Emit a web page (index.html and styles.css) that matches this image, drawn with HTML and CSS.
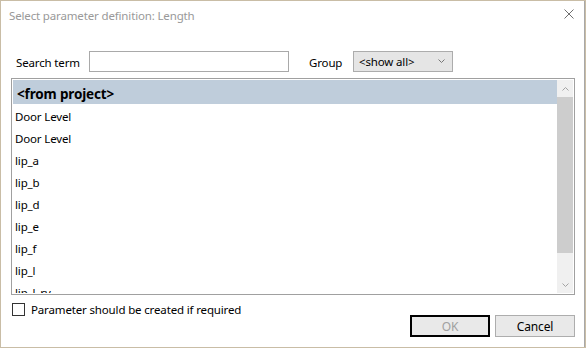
FILE: index.html
```html
<!DOCTYPE html>
<html lang="en">
<head>
    <meta charset="UTF-8">
    <title>Select parameter definition: Length</title>
    <link rel="stylesheet" href="styles.css">
</head>
<body>
    <div class="dialog">
        <div class="titlebar">
            <span class="title">Select parameter definition: Length</span>
            <svg class="close" width="10" height="10" viewBox="0 0 10 10">
                <path d="M0.5 0.5 L9.5 9.5 M9.5 0.5 L0.5 9.5" stroke="#6f6f6f" stroke-width="1" fill="none"/>
            </svg>
        </div>

        <div class="filter">
            <label class="lbl-search">Search term</label>
            <input class="search" type="text">
            <label class="lbl-group">Group</label>
            <div class="select">
                <span>&lt;show all&gt;</span>
                <svg width="7" height="4" viewBox="0 0 7 4">
                    <path d="M0.5 0.5 L3.5 3.5 L6.5 0.5" stroke="#777" fill="none"/>
                </svg>
            </div>
        </div>

        <div class="list">
            <div class="rows">
                <div class="row selected">&lt;from project&gt;</div>
                <div class="row">Door Level</div>
                <div class="row">Door Level</div>
                <div class="row">lip_a</div>
                <div class="row">lip_b</div>
                <div class="row">lip_d</div>
                <div class="row">lip_e</div>
                <div class="row">lip_f</div>
                <div class="row">lip_l</div>
                <div class="row">lip_l_rv</div>
            </div>
            <div class="scrollbar">
                <div class="arrow">
                    <svg width="7" height="4" viewBox="0 0 7 4"><path d="M0.5 3.5 L3.5 0.5 L6.5 3.5" stroke="#a3a3a3" fill="none"/></svg>
                </div>
                <div class="thumb"></div>
                <div class="track"></div>
                <div class="arrow">
                    <svg width="7" height="4" viewBox="0 0 7 4"><path d="M0.5 0.5 L3.5 3.5 L6.5 0.5" stroke="#a3a3a3" fill="none"/></svg>
                </div>
            </div>
        </div>

        <div class="option">
            <span class="checkbox"></span>
            <span>Parameter should be created if required</span>
        </div>

        <div class="buttons">
            <button class="btn default" disabled>OK</button>
            <button class="btn">Cancel</button>
        </div>
    </div>
</body>
</html>
```

FILE: styles.css
```css
body {
    margin: 0;
    background-color: #c9bda6;
    font-family: "Noto Sans", "Open Sans", sans-serif;
    font-size: 11.5px;
    letter-spacing: -0.15px;
    color: #000;
}

.dialog {
    box-sizing: border-box;
    margin: 1px 0 0 1px;
    width: 584px;
    height: 346px;
    background-color: #fff;
    border-right: 1px solid #a8a8a8;
    display: flex;
    flex-direction: column;
}

.titlebar {
    height: 30px;
    display: flex;
    align-items: center;
    justify-content: space-between;
    padding: 0 10px 0 8px;
}

.title {
    color: #999;
    margin-top: -1px;
}

.close {
    margin-top: -4px;
}

.filter {
    display: flex;
    align-items: center;
    height: 21px;
    margin-top: 20px;
    padding-left: 15px;
}

.filter label {
    padding-top: 1px;
}

.lbl-search {
    width: 73px;
}

.search {
    box-sizing: border-box;
    width: 200px;
    height: 21px;
    margin: 0;
    border: 1px solid #a9a9a9;
    padding: 0 4px;
}

.lbl-group {
    width: 44px;
    margin-left: 20px;
}

.select {
    box-sizing: border-box;
    width: 100px;
    height: 21px;
    background-color: #e5e5e5;
    border: 1px solid #acacac;
    display: flex;
    align-items: center;
    justify-content: space-between;
    padding: 0 7px 1px 5px;
}

.list {
    box-sizing: border-box;
    margin: 6px 0 0 10px;
    width: 564px;
    height: 217px;
    border: 1px solid #a0a0a0;
    padding: 1px;
    display: flex;
    overflow: hidden;
}

.rows {
    flex: 1;
    overflow: hidden;
}

.row {
    height: 22px;
    line-height: 26px;
    padding-left: 2px;
    white-space: nowrap;
}

.row.selected {
    height: 24px;
    line-height: 28px;
    background-color: #bfcddb;
    font-weight: bold;
    font-size: 13.5px;
    padding-left: 4px;
}

.scrollbar {
    width: 16px;
    background-color: #f0f0f0;
    display: flex;
    flex-direction: column;
}

.arrow {
    height: 17px;
    display: flex;
    align-items: center;
    justify-content: center;
}

.thumb {
    height: 156px;
    background-color: #cdcdcd;
}

.track {
    flex: 1;
}

.option {
    display: flex;
    align-items: center;
    gap: 6px;
    margin: 7px 0 0 11px;
    height: 15px;
}

.checkbox {
    box-sizing: border-box;
    width: 13px;
    height: 13px;
    border: 1px solid #333;
    background-color: #fff;
}

.buttons {
    display: flex;
    justify-content: flex-end;
    gap: 5px;
    margin-top: -2px;
    padding-right: 9px;
}

.btn {
    box-sizing: border-box;
    width: 80px;
    height: 22px;
    margin: 0;
    background-color: #e9e9e9;
    border: 1px solid #adadad;
    font-family: inherit;
    font-size: 12px;
    letter-spacing: -0.15px;
    color: #000;
    padding: 0;
}

.btn.default {
    border: 2px solid #000;
    color: #a0a0a0;
}
```
